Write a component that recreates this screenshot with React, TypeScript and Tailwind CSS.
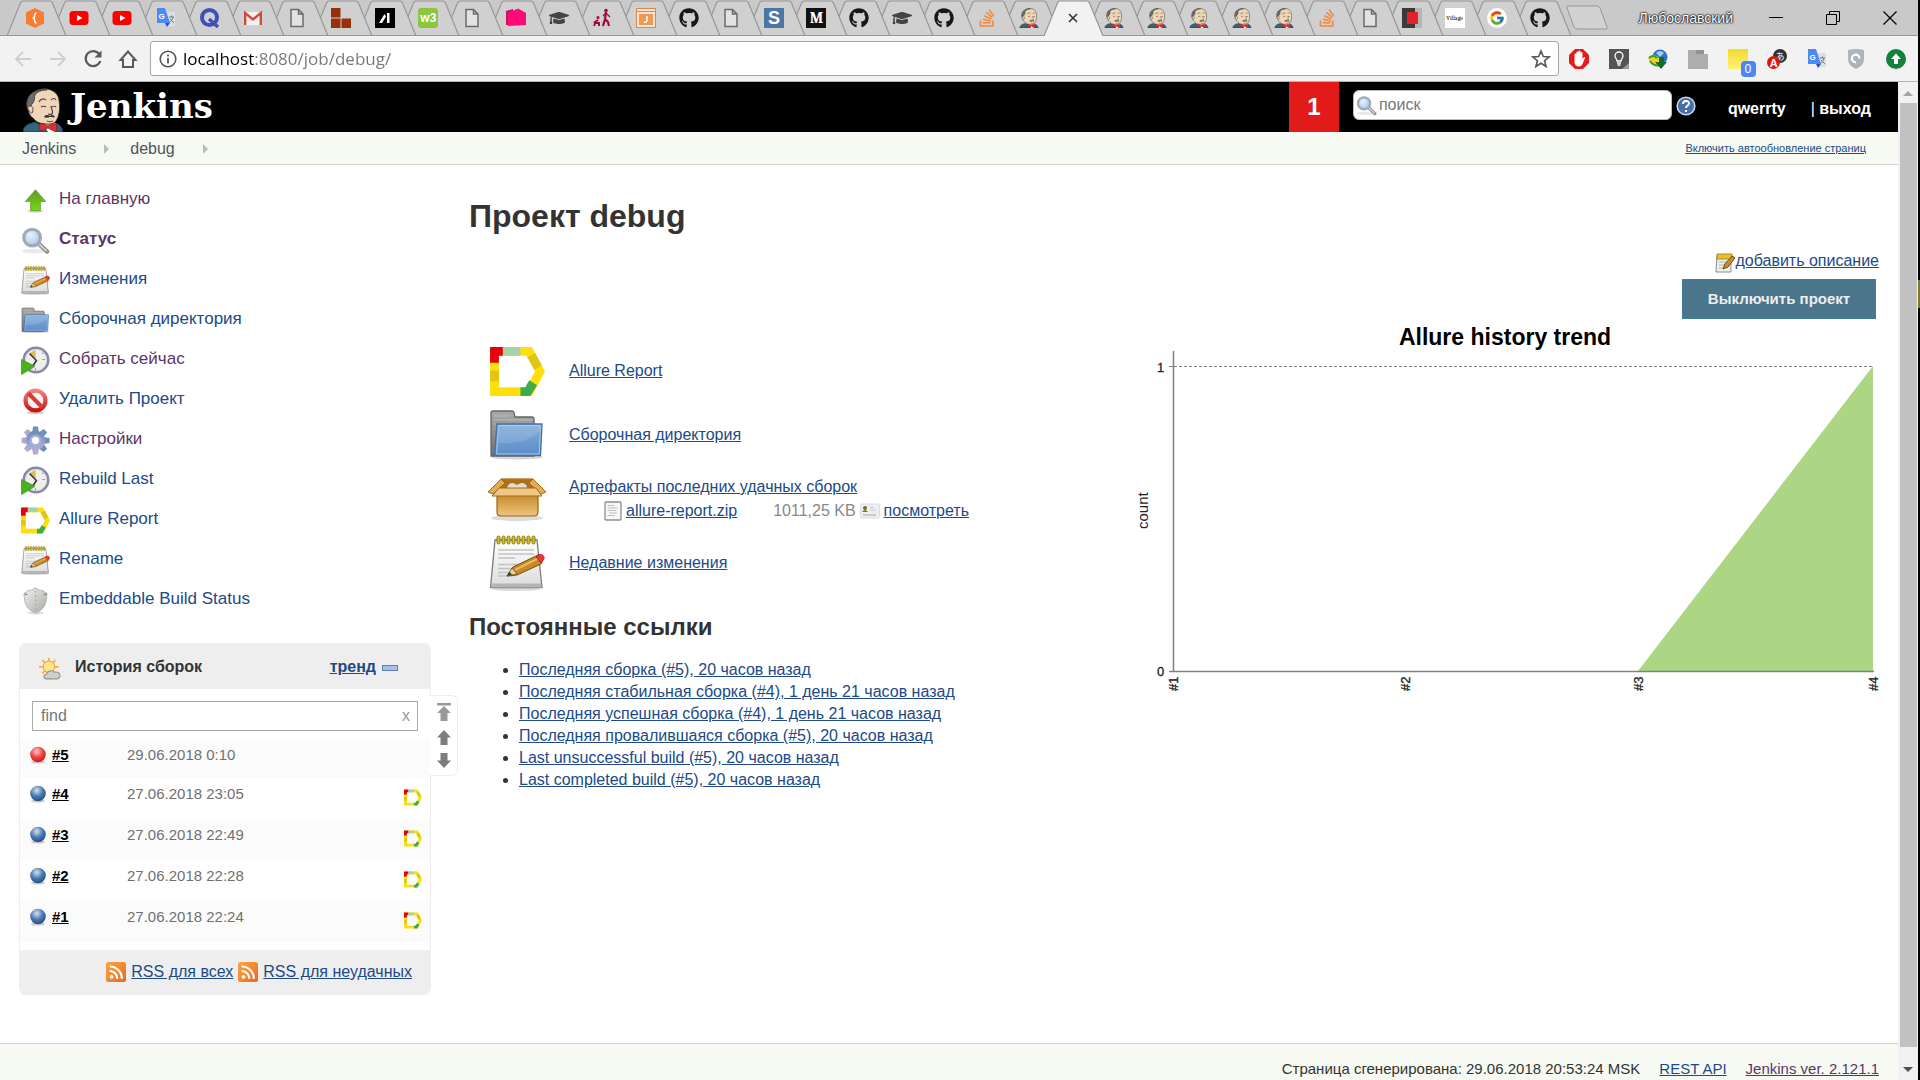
import React from "react";
import { FaGithub, FaStackOverflow, FaGraduationCap } from "react-icons/fa";
import { FcGoogle } from "react-icons/fc";

type IconProps = { className?: string };

/* ---------- shared gradients ---------- */
function Gradients() {
  return (
    <svg width="0" height="0" className="absolute" aria-hidden="true">
      <defs>
        <linearGradient id="gGreen" x1="0" y1="0" x2="0" y2="1">
          <stop offset="0" stopColor="#5d9c2b" />
          <stop offset="0.5" stopColor="#6ab81f" />
          <stop offset="1" stopColor="#6fdc13" />
        </linearGradient>
        <linearGradient id="gBlue" x1="0" y1="0" x2="0" y2="1">
          <stop offset="0" stopColor="#85acd8" />
          <stop offset="1" stopColor="#5b8dc9" />
        </linearGradient>
        <linearGradient id="gGrey" x1="0" y1="0" x2="0" y2="1">
          <stop offset="0" stopColor="#aaaaaa" />
          <stop offset="1" stopColor="#6f6f6f" />
        </linearGradient>
        <linearGradient id="gPaper" x1="0" y1="0" x2="0" y2="1">
          <stop offset="0" stopColor="#ffffff" />
          <stop offset="1" stopColor="#dcdcdc" />
        </linearGradient>
        <linearGradient id="gBox" x1="0" y1="0" x2="0" y2="1">
          <stop offset="0" stopColor="#c98a2e" />
          <stop offset="1" stopColor="#edc57e" />
        </linearGradient>
        <linearGradient id="gGear" x1="0" y1="0" x2="0" y2="1">
          <stop offset="0" stopColor="#6d8ab8" />
          <stop offset="1" stopColor="#b3b0d6" />
        </linearGradient>
        <linearGradient id="gStop" x1="0" y1="0" x2="0" y2="1">
          <stop offset="0" stopColor="#ee8585" />
          <stop offset="1" stopColor="#cc1111" />
        </linearGradient>
        <linearGradient id="gShield" x1="0" y1="0" x2="1" y2="1">
          <stop offset="0" stopColor="#f2f2f0" />
          <stop offset="1" stopColor="#a5a8a3" />
        </linearGradient>
        <linearGradient id="gRss" x1="0" y1="0" x2="1" y2="1">
          <stop offset="0" stopColor="#f8a04c" />
          <stop offset="0.5" stopColor="#f58a2f" />
          <stop offset="1" stopColor="#dd6a2c" />
        </linearGradient>
        <linearGradient id="gYellow" x1="0" y1="0" x2="0" y2="1">
          <stop offset="0" stopColor="#f2d92c" />
          <stop offset="1" stopColor="#fff27a" />
        </linearGradient>
        <radialGradient id="gLens" cx="0.4" cy="0.35" r="0.7">
          <stop offset="0" stopColor="#e8f2fd" />
          <stop offset="1" stopColor="#a4c3e8" />
        </radialGradient>
        <radialGradient id="gBallRed" cx="0.42" cy="0.3" r="0.65">
          <stop offset="0" stopColor="#ffc9c9" />
          <stop offset="0.6" stopColor="#ee4444" />
          <stop offset="1" stopColor="#d81e1e" />
        </radialGradient>
        <radialGradient id="gBallBlue" cx="0.42" cy="0.3" r="0.65">
          <stop offset="0" stopColor="#d6e2ec" />
          <stop offset="0.6" stopColor="#4a7ab2" />
          <stop offset="1" stopColor="#2a5690" />
        </radialGradient>
      </defs>
    </svg>
  );
}

/* ---------- Jenkins icons ---------- */
function Butler({ className }: IconProps) {
  return (
    <svg viewBox="0 0 40 44" className={className} aria-hidden="true">
      <path d="M0 44c0-5 3-8 12-10l8 4 12-3c5 1 7 4 8 9z" fill="#34647e" stroke="#1c3442" />
      <path d="M18 33l7 11h7l1-8-3-3z" fill="#fff" />
      <path d="M10 30C3 27 3 8 13 3c9-5 22-1 23 9 1 6 1 11-1 17-2 6-6 8-12 7-6 0-10-2-13-6z" fill="#f0d6b7" stroke="#333" strokeWidth="1" />
      <path d="M8 24C4 22 3 18 4 13 5 8 9 3 17 2c2-.6 5-.6 7 0-6 0-10 2-12 5-1 2 0 4-1 6-1 1-1 3-3 4z" fill="#6c6b68" stroke="#3a3a3a" strokeWidth="0.8" />
      <path d="M5 19c2-2 5-1 5 2s-1 5-2 4-4-4-3-6z" fill="#f0d6b7" stroke="#444" strokeWidth="0.9" />
      <path d="M16 14c1-3 5-4 7-2M28 12c2-2 4-2 5 0M18 19c1-1 4-1 5 0M29 19c1-1 3-1 4 0M28 18c0 3 3 6 1 8-1 1-3 0-4 0" fill="none" stroke="#444" strokeWidth="1.100" />
      <path d="M21 29c1-3 5-2 6-1 2-2 4-1 5 1-2 1-3 0-5 0-2 1-5 1-6 0z" fill="#3b3733" />
      <path d="M24 33c2 1 4 1 6 0" fill="none" stroke="#704" strokeWidth="0.900" />
      <path d="M17 36c3-1 6 1 8 2 3-2 6-3 8-2 1 3 1 5 0 8-3-1-6-3-8-4-2 1-5 3-8 2-1-2-1-4 0-6z" fill="#d9302c" stroke="#8a1414" strokeWidth="0.600" />
    </svg>
  );
}

function Allure({ className }: IconProps) {
  return (
    <svg viewBox="0 0 56 50" className={className} aria-hidden="true">
      <path d="M4.500 45.500V4.500H40L51 25 40 45.500z" fill="none" stroke="#ffdf0a" strokeWidth="9" />
      <path d="M4.500 24v11" stroke="#e0c416" strokeWidth="9" />
      <path d="M42 8l7 13" stroke="#e0c416" strokeWidth="9" />
      <path d="M13 4.500h18" stroke="#a7d3a6" strokeWidth="9" />
      <path d="M0 0h13v9H9v7H0z" fill="#e8000f" />
      <path d="M31 41h5l4-7 8 5-7 11H31z" fill="#3dac49" />
    </svg>
  );
}

function ArrowUp({ className }: IconProps) {
  return (
    <svg viewBox="0 0 30 30" className={className} aria-hidden="true">
      <ellipse cx="15" cy="26" rx="8" ry="1.600" fill="#bbb" opacity="0.7" />
      <path d="M15 4l10.500 12H20v9.500H10V16H4.500z" fill="url(#gGreen)" stroke="#68a83b" />
    </svg>
  );
}

function Magnifier({ className }: IconProps) {
  return (
    <svg viewBox="0 0 30 30" className={className} aria-hidden="true">
      <ellipse cx="13" cy="26" rx="12" ry="2.500" fill="#e9e9e9" />
      <path d="M18 18l9 8.500" stroke="#8f8f8f" strokeWidth="4.500" strokeLinecap="round" />
      <path d="M19 19l7 6.500" stroke="#d2d2d2" strokeWidth="2" strokeLinecap="round" />
      <circle cx="11.500" cy="12" r="9" fill="url(#gLens)" stroke="#a9aca8" strokeWidth="2.600" />
      <circle cx="11.500" cy="12" r="7.600" fill="none" stroke="#6f9bd1" strokeWidth="0.800" />
    </svg>
  );
}

function Notepad({ className }: IconProps) {
  return (
    <svg viewBox="0 0 56 56" className={className} aria-hidden="true">
      <ellipse cx="27" cy="54" rx="24" ry="2" fill="#ccc" opacity="0.7" />
      <path d="M6 5h42l5 47.500H1.500z" fill="url(#gPaper)" stroke="#7b7b7b" strokeWidth="1.300" />
      <path d="M2 48.500h50l.5 4H2z" fill="#b5b5b5" />
      <path d="M9 15h36M9 19h36M9 23h17M9 29.500h36M9 33.500h30M9 37.500h22M9 41h15" stroke="#c3c3c3" strokeWidth="1.500" />
      {[8, 13, 18, 23, 28, 33, 38, 43].map((x) => (
        <rect key={x} x={x} y="1" width="3" height="8" rx="1.500" fill="#d6c32a" stroke="#8a7711" strokeWidth="1" />
      ))}
      <path d="M18 41l6-9 25-12 5 4-2 5-24 11z" fill="#c68827" stroke="#7a4d0a" strokeWidth="1" />
      <path d="M26 35l24-12" stroke="#eab95e" strokeWidth="2" />
      <path d="M18 41l5-8 5 6z" fill="#ecd2a0" stroke="#7a4d0a" strokeWidth="0.800" />
      <path d="M18 41l2.500-4 2.500 2.500z" fill="#333" />
      <path d="M49 20c3-2 7 1 6 4l-3 4-5-6z" fill="#e33b3b" stroke="#b11" strokeWidth="0.800" />
    </svg>
  );
}

function Folder({ className }: IconProps) {
  return (
    <svg viewBox="0 0 56 50" className={className} aria-hidden="true">
      <ellipse cx="28" cy="47" rx="26" ry="2.500" fill="#bbb" opacity="0.6" />
      <path d="M2 46V3q0-2 2-2h19q1.500 0 2 1.500L26 7h17q2 0 2 2v37z" fill="url(#gGrey)" stroke="#666" strokeWidth="1.300" />
      <path d="M5 6h16M5 10h38M5 14h38" stroke="#c4c4c4" strokeWidth="0.800" />
      <path d="M8 14h45l-1.500 31.500H5.500z" fill="url(#gBlue)" stroke="#3f70b0" strokeWidth="1.300" />
      <path d="M9.500 15.500h42l-1.300 28.500H7.500z" fill="none" stroke="#a6c4e6" strokeWidth="1" />
      <path d="M9 33c18 2 34-4 42-12l1-6H10z" fill="#fff" opacity="0.12" />
    </svg>
  );
}

function ClockRun({ className }: IconProps) {
  return (
    <svg viewBox="0 0 30 30" className={className} aria-hidden="true">
      <circle cx="15.500" cy="14.500" r="12.700" fill="#efefec" stroke="#8886a6" strokeWidth="2.600" />
      <circle cx="15.500" cy="14.500" r="11" fill="none" stroke="#cfcfd8" strokeWidth="0.800" />
      <path d="M8 8l7-4v9z" fill="#d9bd52" />
      <path d="M9 8l7 7-4 6" fill="none" stroke="#333" strokeWidth="1.600" />
      <path d="M22 14h3M15 23v2M22 8l1-1" stroke="#999" strokeWidth="1.200" />
      <path d="M0.500 14l14 7-14 8.500z" fill="#45b41b" stroke="#4f8a32" strokeWidth="0.800" />
    </svg>
  );
}

function StopSign({ className }: IconProps) {
  return (
    <svg viewBox="0 0 30 30" className={className} aria-hidden="true">
      <ellipse cx="15" cy="27.500" rx="9" ry="1.600" fill="#ccc" />
      <circle cx="15" cy="15" r="10.300" fill="#f6f3f3" stroke="url(#gStop)" strokeWidth="4.400" />
      <path d="M7.500 7.500l15 15" stroke="#dc3a3a" strokeWidth="4.200" />
    </svg>
  );
}

function Gear({ className }: IconProps) {
  return (
    <svg viewBox="0 0 30 30" className={className} aria-hidden="true">
      <g fill="url(#gGear)">
        {[0, 45, 90, 135].map((a) => (
          <path key={a} transform={`rotate(${a} 15 15)`} d="M12.500 0.500h5l1 6v17l-1 6h-5l-1-6v-17z" />
        ))}
        <circle cx="15" cy="15" r="10" />
      </g>
      <circle cx="15" cy="15" r="6" fill="#a8b4d6" />
      <circle cx="15" cy="15" r="3.600" fill="#fff" />
    </svg>
  );
}

function Shield({ className }: IconProps) {
  return (
    <svg viewBox="0 0 30 30" className={className} aria-hidden="true">
      <ellipse cx="15" cy="28" rx="9" ry="1.400" fill="#ddd" />
      <path d="M15 2c3 2 6 3 8 3l4 3c0 3-1 5-1 8-1 5-5 10-11 12C9 26 5 21 4 16c0-3-1-5-1-8l4-3c2 0 5-1 8-3z" fill="url(#gShield)" stroke="#b3b5b1" />
      <path d="M15 5v21" stroke="#999" strokeWidth="1" strokeDasharray="1.500 3" />
      <path d="M3.500 8l3 1M26.500 8l-3 1" stroke="#777" strokeWidth="1.200" />
    </svg>
  );
}

function Carton({ className }: IconProps) {
  return (
    <svg viewBox="0 0 60 46" className={className} aria-hidden="true">
      <ellipse cx="30" cy="42" rx="26" ry="3" fill="#ccc" opacity="0.7" />
      <path d="M14 3h32l8 16H6z" fill="#b0701a" />
      <path d="M20 12q1-5 6-5l4 2 4-2q6 0 6 5z" fill="#e2ddd3" />
      <path d="M10 19h41v17q0 4-4 4H14q-4 0-4-4z" fill="url(#gBox)" stroke="#9c6414" strokeWidth="1.200" />
      <path d="M14 3L1 16l5 2L18 7z" fill="#e2ac55" stroke="#a26c1c" />
      <path d="M46 3l13 13-5 2L42 7z" fill="#e2ac55" stroke="#a26c1c" />
      <path d="M14 3h32" stroke="#b07a26" strokeWidth="1.400" />
      <path d="M12 12h37l6 8H5z" fill="#efc684" stroke="#a26c1c" />
    </svg>
  );
}

function TextFile({ className }: IconProps) {
  return (
    <svg viewBox="0 0 18 20" className={className} aria-hidden="true">
      <rect x="1" y="1" width="16" height="18" rx="1" fill="#f8f8f8" stroke="#8d8d8d" strokeWidth="1.300" />
      <path d="M3.500 4.500h7M3.500 7h10M3.500 9.500h9M5 12h8M3.500 14.500h7" stroke="#bdbdbd" />
    </svg>
  );
}

function IdCard({ className }: IconProps) {
  return (
    <svg viewBox="0 0 20 16" className={className} aria-hidden="true">
      <rect x="0.500" y="1" width="19" height="14" rx="1.500" fill="#efefef" stroke="#dcdcdc" />
      <circle cx="5" cy="5" r="2" fill="#8a6230" />
      <path d="M2 9q3-4 6 0z" fill="#4f8a1f" />
      <path d="M10 4.500h4M10 7h6" stroke="#c7c7c7" />
      <path d="M3 12h13" stroke="#bbb" strokeWidth="1.500" />
    </svg>
  );
}

function Weather({ className }: IconProps) {
  return (
    <svg viewBox="0 0 20 20" className={className} aria-hidden="true">
      <path d="M9 0v16M0 8h18M3 2l12 12M15 2L3 14" stroke="#f6b04a" strokeWidth="1.600" />
      <circle cx="9" cy="8" r="5.300" fill="#fde58b" stroke="#f2a73c" />
      <path d="M7 19c-3 0-3.500-4 0-4.500C8 11 13 11 13.500 13c4-1 6 1 5.500 3.500-.5 2-1.500 2.500-3 2.500z" fill="#cfcfcb" stroke="#969690" />
    </svg>
  );
}

function Rss({ className }: IconProps) {
  return (
    <svg viewBox="0 0 20 20" className={className} aria-hidden="true">
      <rect width="20" height="20" rx="2.500" fill="url(#gRss)" />
      <circle cx="5.500" cy="14.800" r="1.900" fill="#fff" />
      <path d="M3.600 9a7.500 7.500 0 017.700 7.700M3.600 4.500a12 12 0 0112.200 12.200" fill="none" stroke="#fff" strokeWidth="2.200" />
    </svg>
  );
}

function Ball({ fill }: { fill: string }) {
  return (
    <svg viewBox="0 0 18 18" className="size-[18px]" aria-hidden="true">
      <ellipse cx="9" cy="16" rx="7" ry="1.600" fill="#ccc" />
      <circle cx="9" cy="8.500" r="7.800" fill={fill} />
    </svg>
  );
}

/* ---------- browser icons ---------- */
const fav = "size-5";

function PageIcon() {
  return (
    <svg viewBox="0 0 20 20" className={fav} aria-hidden="true">
      <path d="M4 1.500h7.500L16 6v12.500H4zM11.500 1.500V6H16" fill="#e2e2e2" stroke="#6b6b6b" strokeWidth="1.500" />
    </svg>
  );
}
function YouTube() {
  return (
    <svg viewBox="0 0 20 20" className={fav} aria-hidden="true">
      <rect x="0.500" y="3" width="19" height="14" rx="3.500" fill="#f00" />
      <path d="M8 7l5.500 3L8 13z" fill="#fff" />
    </svg>
  );
}
function Translate() {
  return (
    <svg viewBox="0 0 20 20" className={fav} aria-hidden="true">
      <path d="M8 4h11v14h-6z" fill="#dedede" />
      <path d="M1 0h8l5 15H1z" fill="#4c8bf5" />
      <path d="M9 15h5l-3 4z" fill="#2f50b5" />
      <text x="2.500" y="10.500" fontSize="8" fontWeight="bold" fill="#fff" fontFamily="Liberation Sans, sans-serif">G</text>
      <path d="M13 9h5M15.500 7.500V9M17 9c-.5 3-2 4.500-4 5.500M14 11l4 4" fill="none" stroke="#5d7f92" strokeWidth="1" />
    </svg>
  );
}
function Stack() {
  return <FaStackOverflow className="size-5 text-[#f0883e]" />;
}
function Git() {
  return <FaGithub className="size-5 text-[#181616]" />;
}
function Cap() {
  return <FaGraduationCap className="size-5 text-[#444]" />;
}
function Jenk() {
  return <Butler className={fav} />;
}
function Letter({ bg, ch, cls }: { bg: string; ch: string; cls: string }) {
  return <span className={`flex size-5 items-center justify-center ${bg} ${cls}`}>{ch}</span>;
}

const favicons: React.ReactNode[] = [
  <svg viewBox="0 0 20 20" className={fav}>
    <path d="M10 0l9 4.500v11L10 20l-9-4.500v-11z" fill="#f97c31" />
    <path d="M11.500 5c-3 0-.8 4-3 5 2.200 1 0 5 3 5" fill="none" stroke="#fff" strokeWidth="1.500" />
  </svg>,
  <YouTube />,
  <YouTube />,
  <Translate />,
  <svg viewBox="0 0 20 20" className={fav}>
    <circle cx="9.500" cy="9.500" r="7.500" fill="none" stroke="#3f51b5" strokeWidth="4" />
    <path d="M9 11l9 8" stroke="#3f51b5" strokeWidth="3.500" />
  </svg>,
  <svg viewBox="0 0 20 20" className={fav}>
    <path d="M1 4h18v13H1z" fill="#f2f2f2" />
    <path d="M2.200 17V5L10 11.500 17.800 5v12" fill="none" stroke="#d5483c" strokeWidth="2.400" />
  </svg>,
  <PageIcon />,
  <svg viewBox="0 0 20 20" className={fav}>
    <path d="M0 0h9.500v9.500H0zM0 10.500h9.500V20H0zM10.500 10.500H20V20h-9.500z" fill="#983008" />
  </svg>,
  <svg viewBox="0 0 20 20" className={fav}>
    <rect width="20" height="20" fill="#000" />
    <path d="M4 15l5.500-9 1.500 2.500L7 15zM12 5h2.500v10H12z" fill="#fff" />
  </svg>,
  <Letter bg="bg-[#8cc63e]" ch="w3" cls="rounded-[3px] text-xs font-bold text-white" />,
  <PageIcon />,
  <svg viewBox="0 0 20 20" className={fav}>
    <path d="M0 3l7-2v16H0z" fill="#c2185b" />
    <path d="M2 5l10-4.500 8 4.500v12l-18 1z" fill="#ff0a78" />
  </svg>,
  <Cap />,
  <svg viewBox="0 0 20 20" className={fav}>
    <circle cx="13" cy="2.500" r="1.800" fill="#a8063c" />
    <path d="M13 4l-1 7-2 7M12 11l3 3 1 4" fill="none" stroke="#a8063c" strokeWidth="2.200" />
    <path d="M13 5l4 4M13 5l-3 3" fill="none" stroke="#a8063c" strokeWidth="1.200" />
    <circle cx="5" cy="9.500" r="1.500" fill="#a8063c" />
    <path d="M5 12l-3 2 4 1v3M3 13l-2 5" fill="none" stroke="#a8063c" strokeWidth="2" />
  </svg>,
  <svg viewBox="0 0 20 20" className={fav}>
    <rect x="0.500" y="0.500" width="19" height="19" fill="#f3e3d2" stroke="#d98a4c" />
    <path d="M0 3.500h20" stroke="#d98a4c" />
    <rect x="3" y="6" width="14" height="11" fill="#ee9a55" />
    <path d="M11 8v5q-1 2-3 1" fill="none" stroke="#fff" strokeWidth="1.500" />
  </svg>,
  <Git />,
  <PageIcon />,
  <Letter bg="bg-[#4a76a8]" ch="S" cls="text-lg font-bold text-white" />,
  <Letter bg="bg-[#111]" ch="M" cls="font-serif text-base font-bold text-white" />,
  <Git />,
  <Cap />,
  <Git />,
  <Stack />,
  <Jenk />,
  null,
  <Jenk />,
  <Jenk />,
  <Jenk />,
  <Jenk />,
  <Jenk />,
  <Stack />,
  <PageIcon />,
  <svg viewBox="0 0 20 20" className={fav}>
    <path d="M0 0h13v20H0z" fill="#3a3a3a" />
    <path d="M13 0h7v20h-7z" fill="#b5b5b5" />
    <rect x="5" y="4" width="11" height="12" fill="#e3222b" />
  </svg>,
  <Letter bg="bg-white" ch="Village" cls="font-serif text-[6px] text-black" />,
  <span className="flex size-5 items-center justify-center rounded-full bg-white">
    <FcGoogle className="size-4" />
  </span>,
  <Git />,
];
const ACTIVE = 24;

function Tab({ index }: { index: number }) {
  const active = index === ACTIVE;
  return (
    <li className="relative flex flex-1 items-center justify-center" style={{ zIndex: active ? 60 : 50 - index }}>
      <svg viewBox="0 0 60 36" className="absolute top-0 left-1/2 -ml-[28px] h-9 w-[60px]" aria-hidden="true">
        <path
          d="M0 36L13.500 3Q14.500 1 16 1H43Q44.500 1 45.500 3L59 36"
          fill={active ? "#f2f2f2" : "#d0d0d0"}
          stroke="#979797"
          strokeWidth="1.200"
        />
        {!active && <path d="M0 35.500h60" stroke="#979797" />}
      </svg>
      {active ? (
        <button type="button" aria-label="Закрыть вкладку" className="relative ml-0.5">
          <svg viewBox="0 0 10 10" className="size-[10px]">
            <path d="M1 1l8 8M9 1L1 9" stroke="#333" strokeWidth="1.600" />
          </svg>
        </button>
      ) : (
        <a href="#tab" aria-label={`Вкладка ${index + 1}`} className="relative">
          {favicons[index]}
        </a>
      )}
    </li>
  );
}

function TabStrip() {
  return (
    <div className="flex h-9 items-stretch border-b border-[#979797] bg-[#c9c9c9] pl-[13px] font-['Liberation_Sans',Arial,sans-serif]">
      <ul className="isolate -mb-px flex w-[1548px] shrink-0">
        <li className="contents">
          <ul className="flex w-[612px]">
            {favicons.slice(0, 14).map((_, i) => (
              <Tab key={i} index={i} />
            ))}
          </ul>
        </li>
        <li className="contents">
          <ul className="flex w-[936px]">
            {favicons.slice(14).map((_, i) => (
              <Tab key={i} index={i + 14} />
            ))}
          </ul>
        </li>
      </ul>
      <button type="button" aria-label="Новая вкладка" className="ml-1">
        <svg viewBox="0 0 44 26" className="h-[26px] w-11">
          <path d="M3 1h29q2 0 3 2l7 19q1 2-1 2H12q-2 0-3-2L2 3q-1-2 1-2z" fill="#d2d2d2" stroke="#979797" />
        </svg>
      </button>
      <div className="ml-auto flex items-center pr-[21px]">
        <span className="mr-9 text-sm text-white [text-shadow:0_0_2px_#000,0_0_2px_#000,0_0_1px_#000]">Любославский</span>
        <button type="button" aria-label="Свернуть" className="mr-[43px]">
          <svg viewBox="0 0 14 14" className="size-[14px]"><path d="M0 6.500h14" stroke="#000" /></svg>
        </button>
        <button type="button" aria-label="Развернуть" className="mr-[43px]">
          <svg viewBox="0 0 14 14" className="size-[14px]"><path d="M.5 3.500h10v10H.5zM3.500 3V.5h10v10H11" fill="none" stroke="#000" /></svg>
        </button>
        <button type="button" aria-label="Закрыть">
          <svg viewBox="0 0 14 14" className="size-[14px]"><path d="M.5.500l13 13M13.500.5l-13 13" stroke="#000" strokeWidth="1.200" /></svg>
        </button>
      </div>
    </div>
  );
}

function Extensions() {
  const c = "size-5";
  const items: [string, React.ReactNode][] = [
    ["AdBlock", <svg viewBox="0 0 20 20" className={c}><path d="M6 0h8l6 6v8l-6 6H6l-6-6V6z" fill="#e41b17" /><path d="M5.500 10V5q1-1 2 0V3q1-1 2 0V2q1-1 2 0v1.500q1-1 2 0V10l1.500-2q1.500 0 1 1l-2.500 6q-1 2.500-4 2.500T5.500 14z" fill="#fff" /></svg>],
    ["Заметки", <svg viewBox="0 0 20 20" className={c}><rect width="20" height="20" fill="#555" /><path d="M13 20h7v-6z" fill="#999" /><path d="M8 12c0-2-2-3-2-5a4 4 0 018 0c0 2-2 3-2 5zM8 14h4M8.500 16h3" fill="none" stroke="#fff" strokeWidth="1.300" /></svg>],
    ["Загрузки", <svg viewBox="0 0 20 20" className={c}><circle cx="12" cy="8" r="7.500" fill="#2f74c4" /><path d="M8 4q4-4 8 0l-4 4z" fill="#9dd0ea" /><path d="M0 9q6-6 11 0v8Q3 17 0 9z" fill="#f4d21c" /><path d="M1 9q4-4 8 0" fill="none" stroke="#2aa23a" strokeWidth="2" /><path d="M2 12q4 6 10 4" fill="none" stroke="#2aa23a" strokeWidth="2" /><path d="M11 8h5v5h3l-6 7-6-7h4z" fill="#176a22" /></svg>],
    ["Папка", <svg viewBox="0 0 20 20" className={c}><path d="M0 1h8v4h12v15H0z" fill="#adadad" /><path d="M8 1h8v4H8z" fill="#919191" /></svg>],
    ["Стикеры", <span className="relative block size-5"><svg viewBox="0 0 20 20" className={c}><rect width="20" height="20" fill="url(#gYellow)" /></svg><span className="absolute -right-2 -bottom-2 flex h-4 w-[15px] items-center justify-center rounded-sm bg-[#4a86f7] text-xs text-white">0</span></span>],
    ["Словарь", <svg viewBox="0 0 20 20" className={c}><circle cx="13" cy="7" r="7" fill="#333" /><text x="8.500" y="11" fontSize="9" fill="#fff" fontFamily="Noto Sans CJK JP, sans-serif">あ</text><circle cx="6.500" cy="13.500" r="6.500" fill="#e8110c" /><text x="2.800" y="17.500" fontSize="11" fontWeight="bold" fill="#fff" fontFamily="Liberation Sans, sans-serif">A</text></svg>],
    ["Переводчик", <Translate />],
    ["Защита", <svg viewBox="0 0 20 20" className={c}><path d="M2 1q8-2 16 0v9q0 7-8 10-8-3-8-10z" fill="#aeb4bd" /><path d="M13.500 9.500A3.800 3.800 0 1010 13.200" fill="none" stroke="#fff" strokeWidth="2.200" /></svg>],
    ["Обновить", <svg viewBox="0 0 20 20" className={c}><circle cx="10" cy="10" r="10" fill="#12823b" /><path d="M10 4.500l5 5.500h-3v5H8v-5H5z" fill="#fff" /></svg>],
  ];
  return (
    <div className="flex w-[359px] shrink-0 items-center justify-between pr-3 pl-2.5">
      {items.map(([name, icon]) => (
        <button key={name} type="button" aria-label={name}>{icon}</button>
      ))}
    </div>
  );
}

function Toolbar() {
  return (
    <div className="flex h-[46px] items-center border-b border-[#b3b3b3] bg-[#f2f2f2] pl-[13px]">
      <div className="flex w-[137px] items-center gap-[15px]">
        <button type="button" aria-label="Назад"><svg viewBox="0 0 20 20" className="size-5"><path d="M18 10H3M10 3l-7 7 7 7" fill="none" stroke="#cfcfcf" strokeWidth="1.800" /></svg></button>
        <button type="button" aria-label="Вперёд"><svg viewBox="0 0 20 20" className="size-5"><path d="M2 10h15M10 3l7 7-7 7" fill="none" stroke="#cfcfcf" strokeWidth="1.800" /></svg></button>
        <button type="button" aria-label="Обновить"><svg viewBox="0 0 20 20" className="size-5"><path d="M16.500 5.500A7.500 7.500 0 1017.300 12" fill="none" stroke="#5a5a5a" strokeWidth="2.200" /><path d="M18.500 1.500v7h-7z" fill="#5a5a5a" /></svg></button>
        <button type="button" aria-label="Домой"><svg viewBox="0 0 20 20" className="size-5"><path d="M10 2.500L2.500 11H5v7h10v-7h2.500z" fill="none" stroke="#5a5a5a" strokeWidth="2" /></svg></button>
      </div>
      <div className="flex h-[35px] flex-1 items-center rounded-[3px] border border-[#a6a6a6] bg-white pr-[7px] pl-2">
        <svg viewBox="0 0 18 18" className="size-[18px]" aria-hidden="true"><circle cx="9" cy="9" r="7.800" fill="none" stroke="#555" strokeWidth="1.600" /><path d="M9 8v5.500M9 4.500v2" stroke="#555" strokeWidth="1.800" /></svg>
        <input
          aria-label="Адрес"
          defaultValue="localhost:8080/job/debug/"
          className="ml-1.5 h-full flex-1 bg-linear-to-r from-black from-[72px] to-[#777] to-[72px] bg-clip-text font-['Open_Sans',sans-serif] text-[17px] text-transparent outline-none"
        />
        <button type="button" aria-label="В закладки"><svg viewBox="0 0 20 20" className="size-5"><path d="M10 2l2.300 5.500 5.900.4-4.600 3.800 1.500 5.800L10 14.300l-5.100 3.200 1.500-5.800L1.800 7.900l5.900-.4z" fill="none" stroke="#555" strokeWidth="1.600" /></svg></button>
      </div>
      <Extensions />
    </div>
  );
}

/* ---------- Jenkins page ---------- */
const link = "text-[#204a87] underline";

function Header() {
  return (
    <header className="flex h-[50px] items-center bg-black pr-[27px] pl-[23px] font-bold text-white">
      <a href="#home" className="flex h-full items-end gap-[7px]">
        <Butler className="h-11 w-10" />
        <span className="mb-[9px] font-['DejaVu_Serif',serif] text-[34px] leading-none">Jenkins</span>
      </a>
      <a href="#warnings" className="ml-auto flex w-[50px] items-center justify-center self-stretch bg-[#e31a1a] text-2xl">1</a>
      <div className="relative mb-1 ml-[14px]">
        <Magnifier className="absolute top-[5px] left-[3px] size-[21px]" />
        <input aria-label="Поиск" placeholder="поиск" className="block h-[30px] w-[319px] rounded-md border border-[#bbb] bg-white pl-[25px] text-base font-normal text-black placeholder:text-[#777] placeholder:opacity-100" />
      </div>
      <a href="#help" aria-label="Справка" className="mb-[3px] ml-1">
        <svg viewBox="0 0 20 20" className="size-5"><circle cx="10" cy="10" r="8.800" fill="#4670aa" stroke="#c8d6e8" strokeWidth="1.600" /><path d="M7 8c0-4 6-4 6-.5 0 2-3 2-3 4.500M10 14v2" fill="none" stroke="#fff" strokeWidth="2" /></svg>
      </a>
      <a href="#user" className="mt-1 ml-8 text-base">qwerrty</a>
      <span className="mt-1 ml-[25px] text-base"><span className="font-normal">|</span> <a href="#logout">выход</a></span>
    </header>
  );
}

function Crumb({ children }: { children: string }) {
  return (
    <li className="flex items-center">
      <a href="#crumb">{children}</a>
      <svg viewBox="0 0 5 10" className="mr-[21px] ml-7 h-[10px] w-[5px]" aria-hidden="true"><path d="M0 0l5 5-5 5z" fill="#bbb" /></svg>
    </li>
  );
}

const tasks: { label: string; icon: (p: IconProps) => React.ReactNode; visited?: boolean; bold?: boolean }[] = [
  { label: "На главную", icon: ArrowUp, visited: true },
  { label: "Статус", icon: Magnifier, visited: true, bold: true },
  { label: "Изменения", icon: Notepad },
  { label: "Сборочная директория", icon: Folder },
  { label: "Собрать сейчас", icon: ClockRun, visited: true },
  { label: "Удалить Проект", icon: StopSign },
  { label: "Настройки", icon: Gear, visited: true },
  { label: "Rebuild Last", icon: ClockRun },
  { label: "Allure Report", icon: Allure },
  { label: "Rename", icon: Notepad },
  { label: "Embeddable Build Status", icon: Shield },
];

const builds = [
  { id: "#5", date: "29.06.2018 0:10", ok: false },
  { id: "#4", date: "27.06.2018 23:05", ok: true },
  { id: "#3", date: "27.06.2018 22:49", ok: true },
  { id: "#2", date: "27.06.2018 22:28", ok: true },
  { id: "#1", date: "27.06.2018 22:24", ok: true },
];

function BuildHistory() {
  return (
    <section className="relative mt-6 w-[412px] rounded-md border border-[#eee] bg-white">
      <div className="flex h-[45px] items-center rounded-t-md bg-[#eee] pl-[19px] font-bold text-[#333]">
        <Weather className="mt-1 size-[22px]" />
        <h2 className="ml-3.5 text-base">История сборок</h2>
        <a href="#trend" className={`mr-1.5 ml-auto ${link}`}>тренд</a>
        <button type="button" aria-label="Свернуть историю" className="mt-0.5 mr-8 h-[6px] w-4 border border-[#5a82b4] bg-[#a9c2e2]" />
      </div>
      <div className="relative px-3 pt-3 pb-2">
        <input aria-label="Найти сборку" placeholder="find" className="block h-[30px] w-full border border-[#aaa] px-2 text-base placeholder:text-[#777] placeholder:opacity-100" />
        <button type="button" aria-label="Очистить" className="absolute top-[15px] right-5 text-base text-[#999]">x</button>
      </div>
      <table className="w-full border-collapse text-[15px] leading-5">
        <tbody>
          {builds.map((b, i) => (
            <tr key={b.id} className={`${i === 0 ? "h-[39px]" : "h-[41px]"} ${i % 2 === 0 ? "bg-[#fbfbfb]" : "bg-white"}`}>
              <td className="w-[107px] pt-1.5 pl-[9px] align-top">
                <a href="#build" className="flex items-center gap-[5px] font-bold text-black underline">
                  <Ball fill={b.ok ? "url(#gBallBlue)" : "url(#gBallRed)"} />
                  {b.id}
                </a>
              </td>
              <td className="pt-1.5 align-top"><a href="#build" className="text-[#707070]">{b.date}</a></td>
              <td className="w-[26px] pt-[11px] align-top">
                {b.ok && <a href="#allure" aria-label="Allure Report"><Allure className="h-[17px] w-[18px]" /></a>}
              </td>
            </tr>
          ))}
        </tbody>
      </table>
      <div className="mt-2 flex h-11 items-center justify-end gap-[5px] rounded-b-md bg-[#eee] pr-[18px]">
        <Rss className="size-5" />
        <a href="#rss" className={link}>RSS для всех</a>
        <Rss className="size-5" />
        <a href="#rss-failed" className={link}>RSS для неудачных</a>
      </div>
      <div className="absolute top-[51px] left-full flex h-[81px] w-7 flex-col items-center justify-between rounded-r-md border border-l-0 border-[#eee] bg-white py-[7px]">
        <button type="button" aria-label="В начало"><svg viewBox="0 0 14 18" className="h-[18px] w-[14px]"><path d="M0 0h14v2.500H0zM7 3l7 7h-3.500v8h-7v-8H0z" fill="#999" /></svg></button>
        <button type="button" aria-label="Новее"><svg viewBox="0 0 14 15" className="h-[15px] w-[14px]"><path d="M7 0l7 7.500h-3.500V15h-7V7.500H0z" fill="#7d7d7d" /></svg></button>
        <button type="button" aria-label="Старее"><svg viewBox="0 0 14 15" className="h-[15px] w-[14px]"><path d="M7 15l7-7.500h-3.500V0h-7v7.500H0z" fill="#7d7d7d" /></svg></button>
      </div>
    </section>
  );
}

function TrendChart() {
  return (
    <svg viewBox="0 0 750 384" className="w-[750px]" fontFamily="Liberation Sans, Arial, sans-serif" role="img" aria-label="Allure history trend">
      <text x="376" y="26" textAnchor="middle" fontSize="23" fontWeight="bold">Allure history trend</text>
      <path d="M40 47.500h704" stroke="#808080" strokeDasharray="3 2" />
      <path d="M509 352L744 47v305z" fill="#acd683" />
      <path d="M44.500 32v320.500M41 352.500h704" fill="none" stroke="#808080" strokeWidth="1.500" />
      <path d="M40 47.500h4M40 352.500h4" stroke="#808080" />
      <g fontSize="13" fill="#222" stroke="#222" strokeWidth="0.300">
        <text x="28" y="53">1</text>
        <text x="28" y="357">0</text>
        <text transform="translate(49 372) rotate(-90)">#1</text>
        <text transform="translate(281 372) rotate(-90)">#2</text>
        <text transform="translate(514 372) rotate(-90)">#3</text>
        <text transform="translate(749 372) rotate(-90)">#4</text>
      </g>
      <text transform="translate(19 210) rotate(-90)" fontSize="15" fill="#222">count</text>
    </svg>
  );
}

const permalinks = [
  "Последняя сборка (#5), 20 часов назад",
  "Последняя стабильная сборка (#4), 1 день 21 часов назад",
  "Последняя успешная сборка (#4), 1 день 21 часов назад",
  "Последняя провалившаяся сборка (#5), 20 часов назад",
  "Last unsuccessful build (#5), 20 часов назад",
  "Last completed build (#5), 20 часов назад",
];

function Row({ icon, children }: { icon: React.ReactNode; children: React.ReactNode }) {
  return (
    <div className="flex h-16 items-center">
      <div className="flex w-[100px] justify-center pr-1">{icon}</div>
      <div>{children}</div>
    </div>
  );
}

function Project() {
  return (
    <main className="flex-1 pr-[19px]">
      <h1 className="mt-[31px] text-[32px] leading-10 font-bold">Проект debug</h1>
      <div className="mt-3.5 flex flex-col items-end">
        <a href="#describe" className={`flex h-[22px] items-center ${link}`}>
          <svg viewBox="0 0 20 20" className="mt-1 size-5" aria-hidden="true">
            <path d="M2 2h14v17H1z" fill="#eee" stroke="#8d8d8d" />
            <path d="M2 1h15v5H2z" fill="#e5bf32" stroke="#b18e17" />
            <path d="M4 9h9M4 12h7M4 15h5" stroke="#b5b5b5" />
            <path d="M8 16l2-5 7-8 3 2-7 9z" fill="#c98f35" stroke="#6b480f" />
          </svg>
          добавить описание
        </a>
        <button type="button" className="mt-[7px] mr-[3px] h-10 w-[194px] border border-[#3f7f96] bg-[#4b758b] text-[15px] font-bold text-[#eee]">Выключить проект</button>
      </div>
      <div className="flex items-start justify-between">
        <div className="pt-5">
          <Row icon={<Allure className="h-[49px] w-[55px]" />}><a href="#allure" className={link}>Allure Report</a></Row>
          <Row icon={<Folder className="h-[50px] w-14" />}><a href="#ws" className={link}>Сборочная директория</a></Row>
          <Row icon={<Carton className="h-[46px] w-[60px]" />}>
            <a href="#artifacts" className={link}>Артефакты последних удачных сборок</a>
            <div className="flex items-center pl-[35px]">
              <TextFile className="h-5 w-[18px]" />
              <a href="#zip" className={`ml-1 ${link}`}>allure-report.zip</a>
              <span className="ml-9 text-[#888]">1011,25 KB</span>
              <IdCard className="ml-1 h-4 w-5" />
              <a href="#view" className={`ml-1 ${link}`}>посмотреть</a>
            </div>
          </Row>
          <Row icon={<Notepad className="size-14" />}><a href="#changes" className={link}>Недавние изменения</a></Row>
          <h2 className="mt-4 text-2xl leading-8 font-bold">Постоянные ссылки</h2>
          <ul className="mt-4 list-disc pl-[50px] leading-[22px]">
            {permalinks.map((p) => (
              <li key={p}><a href="#permalink" className={link}>{p}</a></li>
            ))}
          </ul>
        </div>
        <TrendChart />
      </div>
    </main>
  );
}

export default function App() {
  return (
    <div className="flex min-h-screen bg-white">
      <Gradients />
      <div className="flex min-w-0 flex-1 flex-col">
        <TabStrip />
        <Toolbar />
        <div className="flex flex-1">
          <div className="flex min-w-0 flex-1 flex-col font-['Liberation_Sans',Arial,sans-serif] text-base text-[#333]">
            <Header />
            <nav className="flex h-[33px] items-center justify-between border-b border-[#d3d7cf] bg-[#f6faf2] pt-px pr-8 pl-[22px]">
              <ol className="flex text-[#4d545d]">
                <Crumb>Jenkins</Crumb>
                <Crumb>debug</Crumb>
              </ol>
              <a href="#refresh" className={`text-[11px] ${link}`}>Включить автообновление страниц</a>
            </nav>
            <div className="flex flex-1">
              <aside className="w-[469px] shrink-0 pt-3.5 pl-[19px]">
                <ul>
                  {tasks.map(({ label, icon: Icon, visited, bold }) => (
                    <li key={label}>
                      <a
                        href="#task"
                        className={`flex h-10 items-center gap-[9px] pl-px text-[17px] ${visited ? "text-[#5c3566]" : "text-[#204a87]"} ${bold ? "font-bold" : ""}`}
                      >
                        <span className="mt-0.5 flex size-[30px] items-center justify-center">
                          <Icon className="size-[29px]" />
                        </span>
                        {label}
                      </a>
                    </li>
                  ))}
                </ul>
                <BuildHistory />
              </aside>
              <Project />
            </div>
            <footer className="flex h-[37px] items-center justify-end gap-[19px] border-t border-[#d3d7cf] bg-[#f6faf2] pt-3.5 pr-[19px] text-[15px]">
              <span>Страница сгенерирована: 29.06.2018 20:53:24 MSK</span>
              <a href="#api" className={link}>REST API</a>
              <a href="#version" className="text-[#5c3566] underline">Jenkins ver. 2.121.1</a>
            </footer>
          </div>
          <div className="flex w-5 flex-col items-center bg-[#f1f1f1]" aria-hidden="true">
            <svg viewBox="0 0 10 5" className="mt-[9px] mb-[7px] h-[5px] w-[10px]"><path d="M5 0l5 5H0z" fill="#a3a3a3" /></svg>
            <div className="w-[17px] flex-1 bg-[#c1c1c1]" />
            <svg viewBox="0 0 10 5" className="mt-5 mb-2 h-[5px] w-[10px]"><path d="M5 5L0 0h10z" fill="#505050" /></svg>
          </div>
        </div>
      </div>
      <div className="w-0.5 bg-black pt-[280px]">
        <div className="h-7 bg-[#7d7a2a]" />
      </div>
    </div>
  );
}
